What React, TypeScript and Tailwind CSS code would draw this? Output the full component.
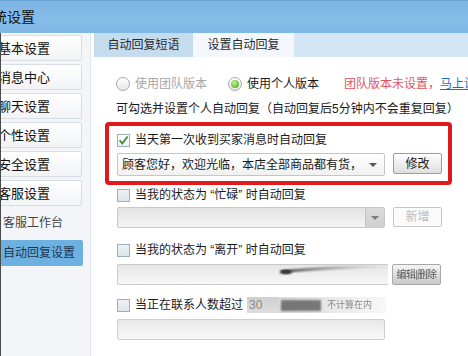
import React from "react";

function Check({ checked }: { checked?: boolean }) {
  return (
    <span
      className={
        "relative block w-[13px] h-[13px] shrink-0 border border-[#9eadbf] " +
        (checked
          ? "bg-gradient-to-b from-[#ffffff] to-[#eef2f5]"
          : "bg-gradient-to-b from-[#eef2f6] to-[#dde4ec]")
      }
    >
      {checked && (
        <svg className="absolute left-[0px] top-[0px]" width="11" height="11" viewBox="0 0 11 11">
          <path d="M1.6 5.2 L4.3 8.6 L9.6 1.4" fill="none" stroke="#3f8a2a" strokeWidth="1.7" />
        </svg>
      )}
    </span>
  );
}

function Radio({ on }: { on?: boolean }) {
  return (
    <span className="flex items-center justify-center w-[14px] h-[14px] shrink-0 rounded-full border border-[#a9a9a9] bg-gradient-to-b from-[#ffffff] to-[#e6e6e6]">
      {on && (
        <span className="block w-[8px] h-[8px] rounded-full bg-[radial-gradient(circle_at_40%_35%,#c4f58a,#3f9f1b)]" />
      )}
    </span>
  );
}

function Arrow({ color }: { color: string }) {
  return (
    <span
      className="block w-0 h-0 border-l-[4px] border-r-[4px] border-t-[4px] border-l-transparent border-r-transparent"
      style={{ borderTopColor: color }}
    />
  );
}

function SideBtn({ label }: { label: string }) {
  return (
    <div className="ml-[-4px] w-[85px] h-[26px] flex items-center border border-[#d9dee4] rounded-[2px] bg-gradient-to-b from-[#ffffff] to-[#f1f3f5] text-[13px] text-[#111] leading-none whitespace-nowrap">
      {label}
    </div>
  );
}

export default function App() {
  return (
    <div className="w-[468px] h-[356px] overflow-hidden bg-white flex flex-col font-['Liberation_Sans','Noto_Sans_CJK_SC',sans-serif] text-[12px] text-[#1a1a1a] leading-none">
      {/* title bar */}
      <div className="h-[33px] shrink-0 flex items-center bg-gradient-to-b from-[#7db4e2] via-[#86bce8] to-[#7fb7e5] border-t border-[#6aa3d6]">
        <span className="ml-[-7px] text-[14px] text-[#111] whitespace-nowrap">统设置</span>
      </div>

      <div className="flex flex-1 min-h-0">
        {/* sidebar */}
        <div className="w-[91px] shrink-0 overflow-hidden bg-[#f3f5f8] border-l border-[#4a4a4a] border-r border-r-[#dfe4ea] pt-[2px] flex flex-col gap-[3px]">
          <SideBtn label="基本设置" />
          <SideBtn label="消息中心" />
          <SideBtn label="聊天设置" />
          <SideBtn label="个性设置" />
          <SideBtn label="安全设置" />
          <SideBtn label="客服设置" />
          <div className="h-[28px] flex items-center pl-[2px] text-[12px] text-[#444] whitespace-nowrap">客服工作台</div>
          <div className="ml-[-1px] w-[83px] h-[26px] flex items-center pl-[3px] bg-[#6db1e1] rounded-[2px] text-[12px] text-[#1b3550] whitespace-nowrap">
            自动回复设置
          </div>
        </div>

        {/* main panel */}
        <div className="flex-1 min-w-0 pl-[3px] flex flex-col">
          {/* tabs */}
          <div className="h-[24px] shrink-0 flex bg-[#d3e6f6]">
            <div className="w-[99px] flex items-center justify-center bg-[#c5dcef] text-[12px] text-[#2a2a2a]">自动回复短语</div>
            <div className="w-[101px] flex items-center justify-center bg-[#f4f8fc] text-[12px] text-[#2a2a2a]">设置自动回复</div>
          </div>

          <div className="pl-[11px] flex flex-col">
            {/* radio row */}
            <div className="mt-[17px] h-[20px] pl-[11px] flex items-center whitespace-nowrap overflow-hidden">
              <Radio />
              <span className="ml-[5px] text-[#a6a6a6]">使用团队版本</span>
              <span className="ml-[21px]"><Radio on /></span>
              <span className="ml-[5px] text-[#1a1a1a]">使用个人版本</span>
              <span className="ml-[25px] text-[#e0545e]">团队版本未设置，</span>
              <span className="text-[#1b6cc4] underline">马上设置</span>
            </div>

            {/* hint */}
            <div className="mt-[6px] h-[18px] pl-[11px] flex items-center whitespace-nowrap">
              可勾选并设置个人自动回复（自动回复后5分钟内不会重复回复）
            </div>

            {/* red box */}
            <div className="mt-[4px] w-[347px] border-[4px] border-[#e01a1a] rounded-[4px] pt-[7px] pb-[5px] pl-[8px] flex flex-col">
              <div className="h-[14px] flex items-center">
                <Check checked />
                <span className="ml-[5px] whitespace-nowrap">当天第一次收到买家消息时自动回复</span>
              </div>
              <div className="mt-[6px] flex gap-[8px]">
                <div className="w-[268px] h-[23px] flex items-center border border-[#c6c6c6] rounded-[2px] bg-gradient-to-b from-[#ffffff] to-[#f1f1f1] pl-[4px] pr-[7px]">
                  <span className="whitespace-nowrap">顾客您好，欢迎光临，本店全部商品都有货，</span>
                  <span className="ml-auto"><Arrow color="#555" /></span>
                </div>
                <div className="w-[49px] h-[21px] flex items-center justify-center border border-[#9d9d9d] rounded-[2px] bg-gradient-to-b from-[#ffffff] to-[#dedede] text-[#1a1a1a]">
                  修改
                </div>
              </div>
            </div>

            {/* busy */}
            <div className="mt-[3px] h-[14px] pl-[12px] flex items-center">
              <Check />
              <span className="ml-[5px] whitespace-pre">当我的状态为 “忙碌” 时自动回复</span>
            </div>
            <div className="mt-[5px] pl-[12px] flex gap-[8px]">
              <div className="w-[268px] h-[21px] flex border border-[#c9c9c9] rounded-[2px] bg-gradient-to-b from-[#e3e3e3] to-[#f3f3f3]">
                <span className="ml-auto w-[19px] h-full flex items-center justify-center bg-gradient-to-b from-[#dcdcdc] to-[#cfcfcf] border-l border-[#c4c4c4]">
                  <Arrow color="#7a7a7a" />
                </span>
              </div>
              <div className="w-[49px] h-[20px] flex items-center justify-center border border-[#c6c6c6] rounded-[2px] bg-[#fbfbfb] text-[#bdbdbd]">
                新增
              </div>
            </div>

            {/* away */}
            <div className="mt-[15px] h-[14px] pl-[12px] flex items-center">
              <Check />
              <span className="ml-[5px] whitespace-pre">当我的状态为 “离开” 时自动回复</span>
            </div>
            <div className="mt-[7px] pl-[12px] flex gap-[4px]">
              <div className="relative w-[271px] h-[21px] border border-[#cacaca] border-r-0 rounded-l-[2px] bg-gradient-to-b from-[#e6e6e6] to-[#f7f7f7] overflow-hidden">
                <svg className="absolute left-0 top-0" width="271" height="21" viewBox="0 0 271 21">
                  <defs>
                    <filter id="b1"><feGaussianBlur stdDeviation="1.2" /></filter>
                    <linearGradient id="g1" x1="0" x2="1">
                      <stop offset="0" stopColor="#222" />
                      <stop offset="1" stopColor="#999" stopOpacity="0" />
                    </linearGradient>
                  </defs>
                  <path d="M163 7 C 190 3, 240 2, 271 1" stroke="url(#g1)" strokeWidth="2.5" fill="none" filter="url(#b1)" />
                  <ellipse cx="168" cy="7" rx="6" ry="2.5" fill="#333" filter="url(#b1)" />
                </svg>
              </div>
              <div className="w-[49px] h-[21px] flex items-center justify-center border border-[#a8a8a8] rounded-[2px] bg-gradient-to-b from-[#f4f4f4] to-[#c9c9c9] text-[#555] text-[10px] blur-[0.5px] tracking-tighter">
                编辑|删除
              </div>
            </div>

            {/* count */}
            <div className="mt-[13px] h-[14px] pl-[12px] flex items-center">
              <Check />
              <span className="ml-[5px] whitespace-nowrap">当正在联系人数超过</span>
              <span className="ml-[4px] w-[31px] h-[16px] flex items-center pl-[2px] bg-gradient-to-b from-[#cfcfcf] to-[#dedede] text-[#8a8a8a] text-[12px]">30</span>
              <span className="relative w-[108px] h-[16px] flex items-center bg-gradient-to-r from-[#dadada] to-[#f8f8f8] overflow-hidden">
                <span className="ml-[3px] w-[40px] h-[11px] bg-[#4a4a4a] blur-[1.2px] opacity-70" />
                <span className="ml-[6px] text-[9px] text-[#888] whitespace-nowrap blur-[0.4px]">不计算在内</span>
              </span>
            </div>
            <div className="mt-[7px] pl-[12px] flex">
              <div className="w-[268px] h-[21px] border border-[#cfcfcf] rounded-[2px] bg-gradient-to-b from-[#e8e8e8] to-[#f8f8f8]" />
            </div>
          </div>
        </div>
      </div>
    </div>
  );
}
